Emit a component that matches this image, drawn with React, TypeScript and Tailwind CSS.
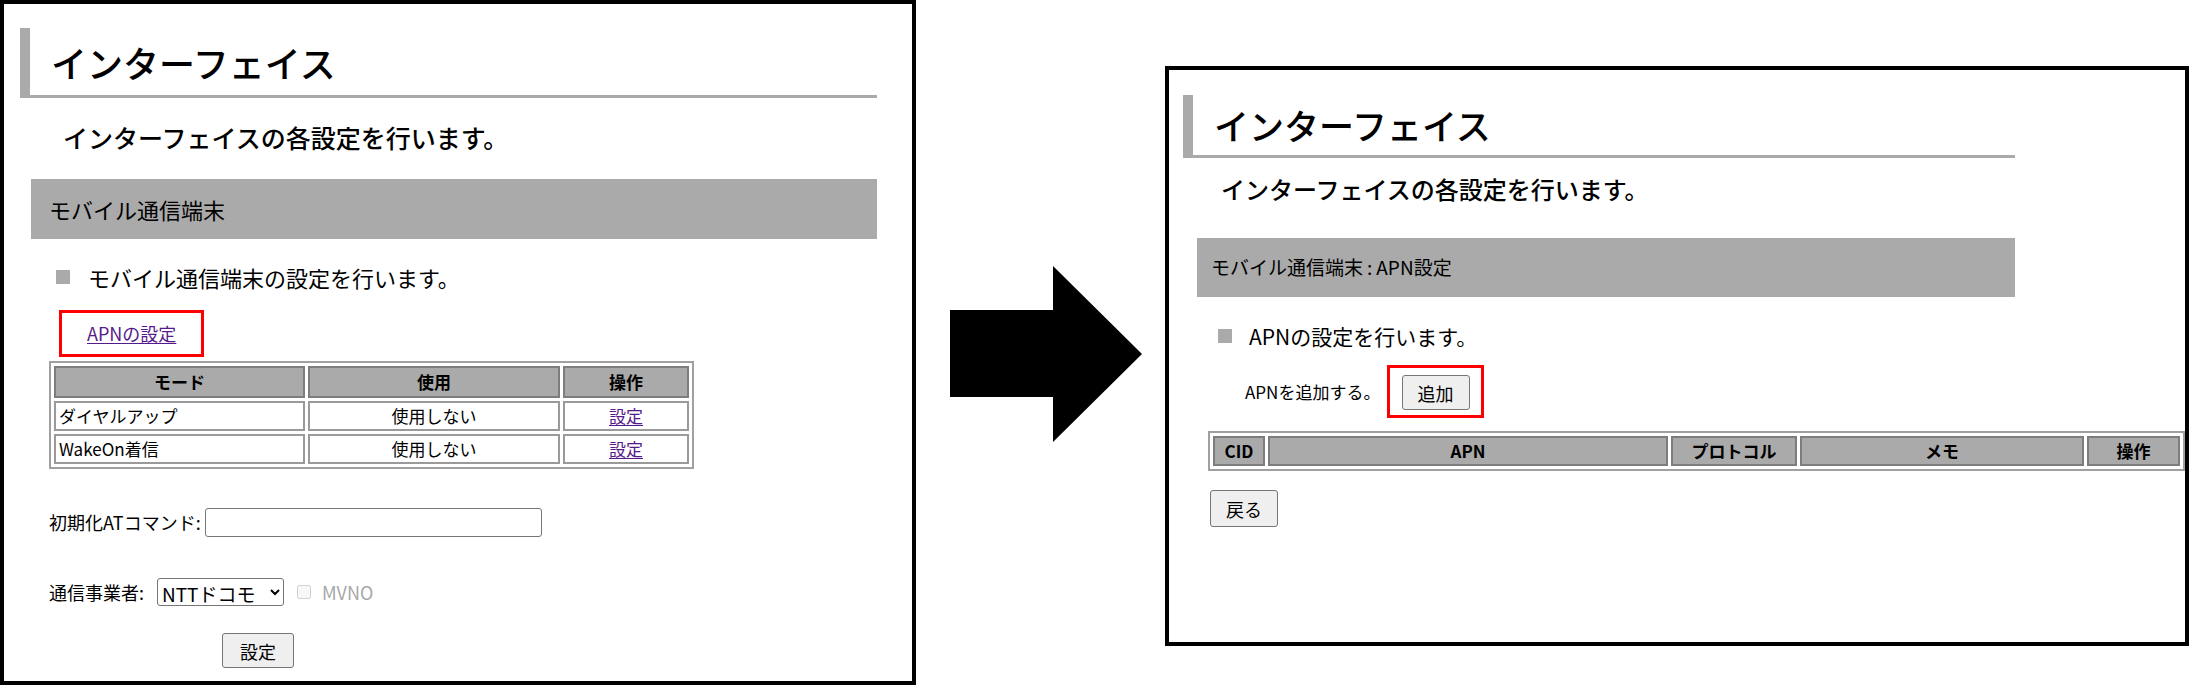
import React from "react";

const Heading = ({ box, title }: { box: string; title: string }) => (
  <div
    className={`flex items-center border-l-[10px] border-b-[3px] border-[#aaaaaa] ${box}`}
  >
    <h1 className={title}>インターフェイス</h1>
  </div>
);

const btn =
  "bg-[#efefef] border border-[#767676] rounded-[3px] text-[18px] text-black leading-none flex items-center justify-center";

const InterfacePanel = () => (
  <div className="w-[916px] h-[685px] shrink-0 border-4 border-black flex flex-col">
    <Heading
      box="mt-[24px] ml-[16px] w-[857px] h-[70px] pl-[21px]"
      title="text-[36px] leading-[40px] font-medium text-black"
    />
    <p className="mt-[25px] ml-[59px] text-[25px] leading-[28px] font-medium text-black">
      インターフェイスの各設定を行います。
    </p>
    <div className="mt-[28px] ml-[27px] w-[846px] h-[60px] bg-[#aaaaaa] flex items-center pl-[18px] text-[22px] text-black">
      モバイル通信端末
    </div>
    <div className="mt-[23px] ml-[52px] h-[30px] flex items-center gap-[18px]">
      <span className="w-[14px] h-[14px] bg-[#aaaaaa] shrink-0" />
      <span className="text-[22px] leading-[30px] text-black">
        モバイル通信端末の設定を行います。
      </span>
    </div>
    <div className="mt-[18px] ml-[55px] w-[145px] h-[47px] border-[3px] border-[#ff0000] flex items-center pl-[25px]">
      <a className="text-[18px] text-[#551a8b] underline underline-offset-2">
        APNの設定
      </a>
    </div>
    <table className="mt-[4px] ml-[45px] w-[641px] table-fixed border-separate border-spacing-[3px] border-2 border-[#a0a0a0] text-[17px] text-black">
      <thead>
        <tr>
          <th className="w-[251px] h-[32px] bg-[#aaaaaa] border-2 border-[#7d7d7d] font-bold">
            モード
          </th>
          <th className="w-[252px] h-[32px] bg-[#aaaaaa] border-2 border-[#7d7d7d] font-bold">
            使用
          </th>
          <th className="w-[126px] h-[32px] bg-[#aaaaaa] border-2 border-[#7d7d7d] font-bold">
            操作
          </th>
        </tr>
      </thead>
      <tbody>
        {["ダイヤルアップ", "WakeOn着信"].map((mode) => (
          <tr key={mode}>
            <td className="h-[30px] border-2 border-[#9a9a9a] px-[3px]">{mode}</td>
            <td className="h-[30px] border-2 border-[#9a9a9a] text-center">使用しない</td>
            <td className="h-[30px] border-2 border-[#9a9a9a] text-center">
              <a className="text-[#551a8b] underline underline-offset-2">設定</a>
            </td>
          </tr>
        ))}
      </tbody>
    </table>
    <div className="mt-[39px] ml-[45px] flex items-center gap-[4px] text-[18px] text-black">
      <span>初期化ATコマンド:</span>
      <input
        type="text"
        className="w-[337px] h-[29px] border border-[#767676] rounded-[3px] bg-white"
      />
    </div>
    <div className="mt-[41px] ml-[45px] flex items-center text-[18px] text-black">
      <span className="w-[108px]">通信事業者:</span>
      <select className="w-[127px] h-[28px] border border-[#767676] rounded-[3px] bg-white text-[19px] text-black">
        <option>NTTドコモ</option>
      </select>
      <input
        type="checkbox"
        disabled
        className="ml-[13px] w-[14px] h-[14px]"
      />
      <span className="ml-[11px] text-[18px] text-[#a8a8a8]">MVNO</span>
    </div>
    <button className={`mt-[27px] ml-[218px] w-[72px] h-[35px] ${btn}`}>
      設定
    </button>
  </div>
);

const Arrow = () => (
  <svg
    width="192"
    height="176"
    viewBox="0 0 192 176"
    className="ml-[34px] mt-[266px] shrink-0"
  >
    <polygon
      points="0,44 103,44 103,0 192,88 103,176 103,131 0,131"
      fill="#000"
    />
  </svg>
);

const ApnPanel = () => (
  <div className="ml-[23px] mt-[66px] w-[1024px] h-[580px] shrink-0 border-4 border-black flex flex-col">
    <Heading
      box="mt-[25px] ml-[14px] w-[832px] h-[63px] pl-[21px]"
      title="text-[35px] leading-[40px] font-medium text-black"
    />
    <p className="mt-[17px] ml-[52px] text-[24px] leading-[28px] font-medium text-black">
      インターフェイスの各設定を行います。
    </p>
    <div className="mt-[35px] ml-[28px] w-[818px] h-[59px] bg-[#aaaaaa] flex items-center pl-[14px] text-[19px] text-black">
      モバイル通信端末<span className="mx-[4px]">:</span>APN設定
    </div>
    <div className="mt-[24px] ml-[49px] h-[30px] flex items-center gap-[17px]">
      <span className="w-[14px] h-[14px] bg-[#aaaaaa] shrink-0" />
      <span className="text-[21px] leading-[30px] text-black">
        APNの設定を行います。
      </span>
    </div>
    <div className="mt-[14px] ml-[76px] flex items-center">
      <span className="text-[17px] text-black w-[142px]">APNを追加する。</span>
      <div className="w-[97px] h-[53px] border-[3px] border-[#ff0000] flex items-start justify-center pt-[7px]">
        <button className={`w-[68px] h-[35px] ${btn}`}>追加</button>
      </div>
    </div>
    <table className="mt-[13px] ml-[39px] w-[977px] table-fixed border-separate border-spacing-[3px] border-2 border-[#a0a0a0] text-[17px] text-black">
      <thead>
        <tr>
          <th className="w-[52px] h-[30px] bg-[#aaaaaa] border-2 border-[#7d7d7d] font-bold">
            CID
          </th>
          <th className="w-[400px] h-[30px] bg-[#aaaaaa] border-2 border-[#7d7d7d] font-bold">
            APN
          </th>
          <th className="w-[126px] h-[30px] bg-[#aaaaaa] border-2 border-[#7d7d7d] font-bold">
            プロトコル
          </th>
          <th className="w-[284px] h-[30px] bg-[#aaaaaa] border-2 border-[#7d7d7d] font-bold">
            メモ
          </th>
          <th className="h-[30px] bg-[#aaaaaa] border-2 border-[#7d7d7d] font-bold">
            操作
          </th>
        </tr>
      </thead>
    </table>
    <button className={`mt-[19px] ml-[41px] w-[68px] h-[37px] ${btn}`}>
      戻る
    </button>
  </div>
);

export default function App() {
  return (
    <div className="w-[2193px] h-[688px] bg-white flex items-start overflow-hidden font-['Noto_Sans_CJK_JP','Noto_Sans',sans-serif]">
      <InterfacePanel />
      <Arrow />
      <ApnPanel />
    </div>
  );
}
